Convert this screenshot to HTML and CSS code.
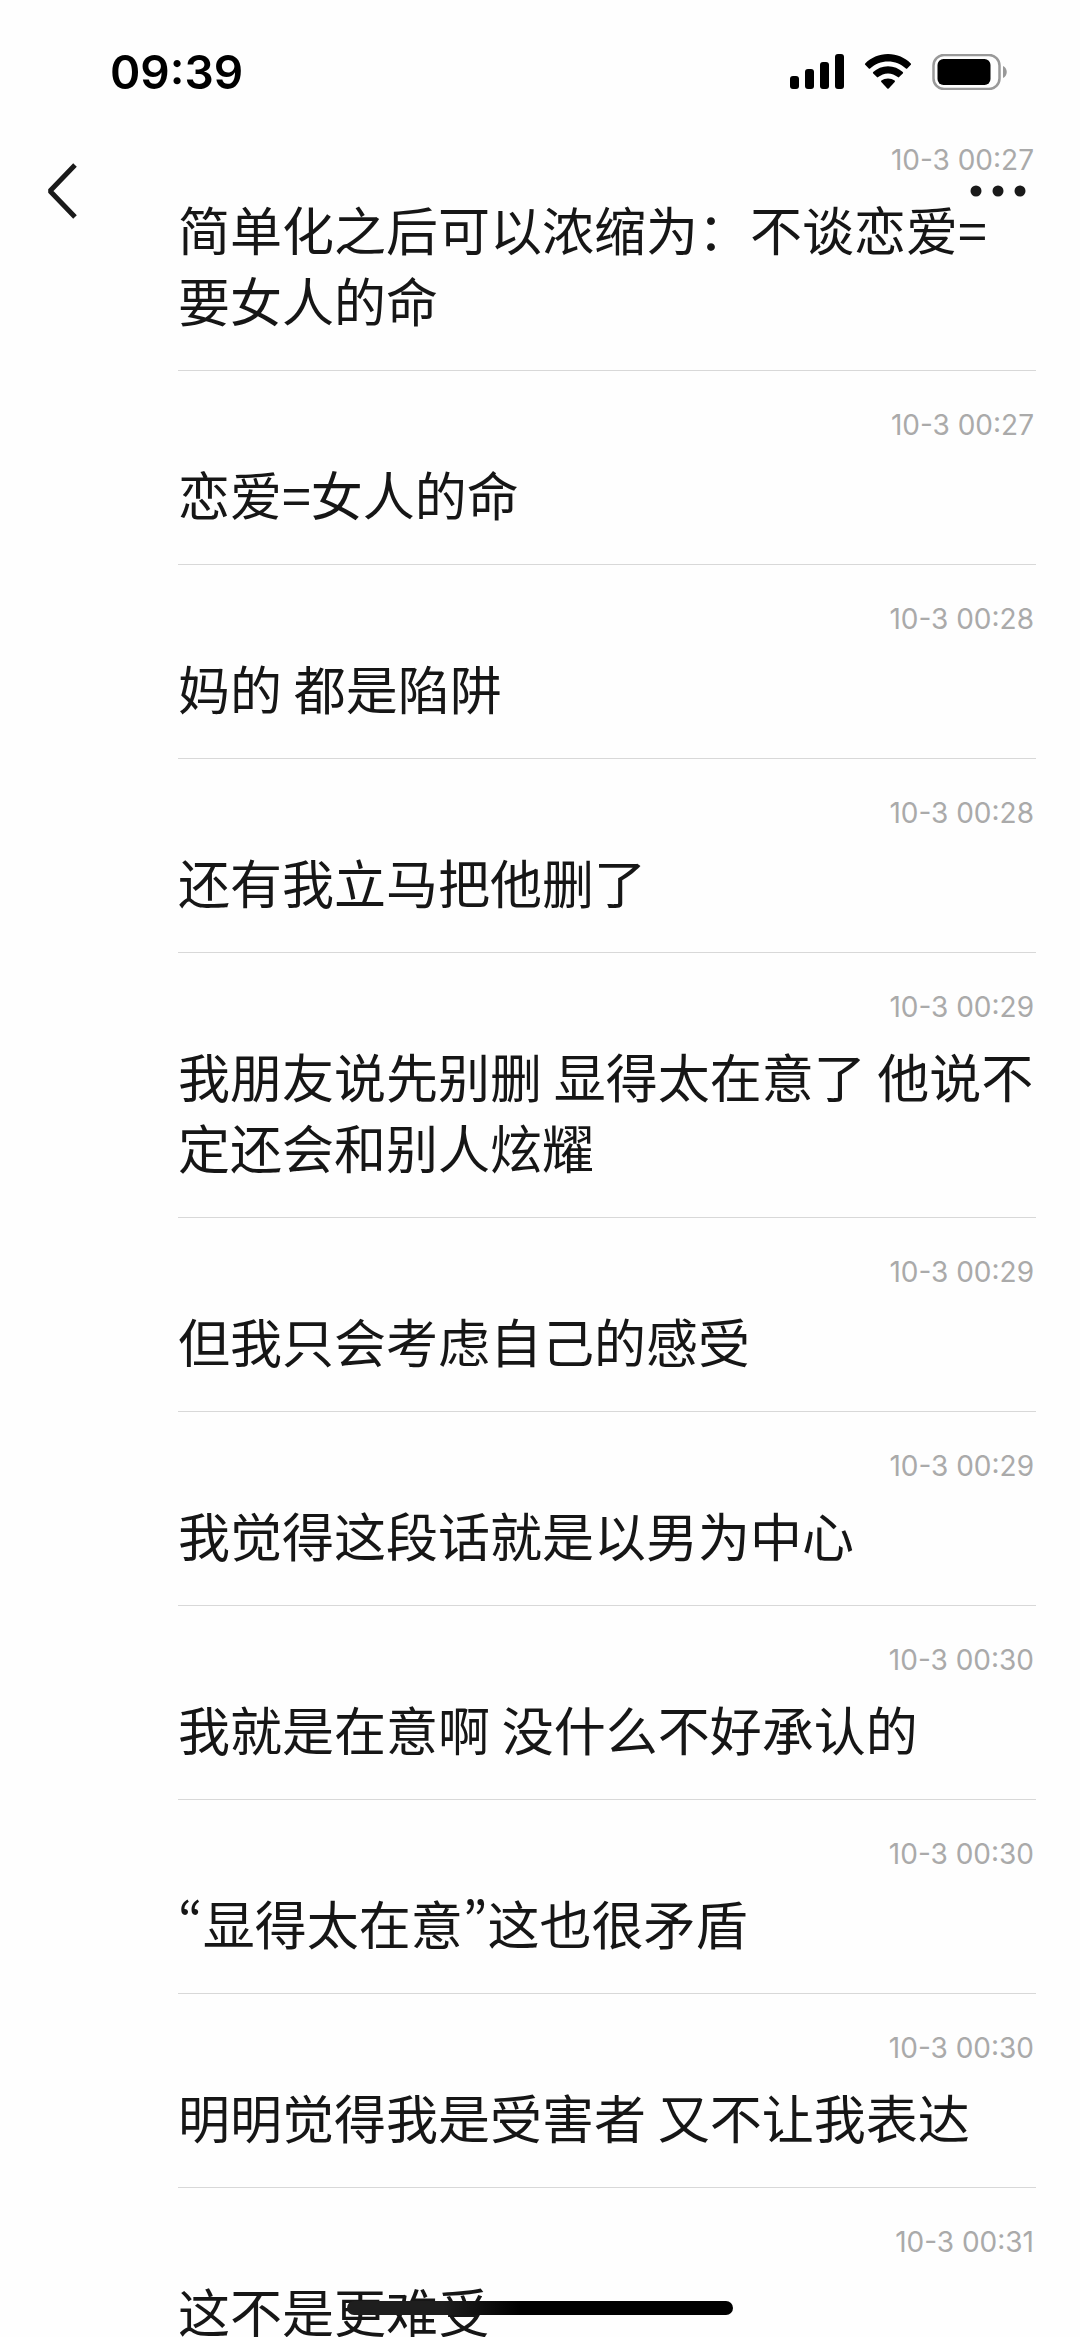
FILE: index.html
```html
<!DOCTYPE html>
<html lang="zh-CN">
<head>
    <meta charset="UTF-8">
    <meta name="viewport" content="width=device-width, initial-scale=1.0">
    <title>聊天记录</title>
    <link rel="stylesheet" href="styles.css">
</head>
<body>
<header class="top-bar">
    <div class="status-bar">
        <span class="clock">09:39</span>
        <div class="status-icons">
            <svg width="54" height="36" viewBox="0 0 54 36">
                <rect x="0" y="22" width="9" height="13" rx="3"/>
                <rect x="15" y="15" width="9" height="20" rx="3"/>
                <rect x="30" y="8" width="9" height="27" rx="3"/>
                <rect x="45" y="0" width="9" height="35" rx="3"/>
            </svg>
            <svg width="48" height="36" viewBox="0 0 48 36">
                <path d="M24 0C33 0 41 3.600 46.800 9.400Q47.500 10.100 46.800 10.800L43.200 14.400Q42.600 15 41.900 14.400C37 9.900 30.800 7.400 24 7.400S11 9.900 6.100 14.400Q5.400 15 4.800 14.400L1.200 10.800Q.5 10.100 1.200 9.400C7 3.600 15 0 24 0Z"/>
                <path d="M24 12.200C29.700 12.200 34.900 14.400 38.800 18Q39.500 18.700 38.800 19.400L35.100 23.100Q34.500 23.700 33.800 23.100C31.100 20.800 27.700 19.400 24 19.400S16.900 20.800 14.200 23.100Q13.500 23.700 12.900 23.100L9.200 19.400Q8.500 18.700 9.200 18C13.100 14.400 18.300 12.200 24 12.200Z"/>
                <path d="M24 24.400C26.500 24.400 28.800 25.200 30.600 26.600Q31.300 27.200 30.700 27.900L24.700 34.400Q24 35.100 23.300 34.400L17.300 27.900Q16.700 27.200 17.400 26.600C19.200 25.200 21.500 24.400 24 24.400Z"/>
            </svg>
            <svg width="76" height="36" viewBox="0 0 76 36">
                <rect x="1.500" y="1" width="66" height="34" rx="10.500" fill="none" stroke="#999" stroke-width="2.500"/>
                <rect x="5.500" y="5" width="53" height="26" rx="6"/>
                <path d="M71 12C76 14 76 22 71 24Z" fill="#999"/>
            </svg>
        </div>
    </div>
    <nav class="nav-bar">
        <button class="nav-btn" aria-label="返回">
            <svg width="32" height="56" viewBox="0 0 32 56">
                <path d="M29 2L4 28L29 54" fill="none" stroke="#1a1a1a" stroke-width="5" stroke-linejoin="bevel"/>
            </svg>
        </button>
        <button class="nav-btn" aria-label="更多">
            <svg width="56" height="12" viewBox="0 0 56 12" fill="#1a1a1a">
                <circle cx="6" cy="6" r="5.500"/>
                <circle cx="28" cy="6" r="5.500"/>
                <circle cx="50" cy="6" r="5.500"/>
            </svg>
        </button>
    </nav>
</header>

<main class="record-list">
    <article class="record">
        <time>10-3 00:27</time>
        <p>简单化之后可以浓缩为：不谈恋爱=要女人的命</p>
    </article>
    <article class="record">
        <time>10-3 00:27</time>
        <p>恋爱=女人的命</p>
    </article>
    <article class="record">
        <time>10-3 00:28</time>
        <p>妈的 都是陷阱</p>
    </article>
    <article class="record">
        <time>10-3 00:28</time>
        <p>还有我立马把他删了</p>
    </article>
    <article class="record">
        <time>10-3 00:29</time>
        <p>我朋友说先别删 显得太在意了 他说不定还会和别人炫耀</p>
    </article>
    <article class="record">
        <time>10-3 00:29</time>
        <p>但我只会考虑自己的感受</p>
    </article>
    <article class="record">
        <time>10-3 00:29</time>
        <p>我觉得这段话就是以男为中心</p>
    </article>
    <article class="record">
        <time>10-3 00:30</time>
        <p>我就是在意啊 没什么不好承认的</p>
    </article>
    <article class="record">
        <time>10-3 00:30</time>
        <p>“显得太在意”这也很矛盾</p>
    </article>
    <article class="record">
        <time>10-3 00:30</time>
        <p>明明觉得我是受害者 又不让我表达</p>
    </article>
    <article class="record">
        <time>10-3 00:31</time>
        <p>这不是更难受</p>
    </article>
</main>

<div class="home-indicator"></div>
</body>
</html>
```

FILE: styles.css
```css
:root {
    --text-color: #161616;
    --time-color: #aaa;
    --line-color: #d8d8d8;
}

* {
    margin: 0;
    padding: 0;
    box-sizing: border-box;
}

body {
    height: 100vh;
    overflow: hidden;
    background: #fefefe;
    color: var(--text-color);
    font-family: Inter, 'Noto Sans CJK SC', sans-serif;
}

/* Status bar and navigation float over the list */
.top-bar {
    position: fixed;
    top: 0;
    left: 0;
    right: 0;
    z-index: 1;
}

.status-bar {
    display: flex;
    justify-content: space-between;
    align-items: center;
    height: 144px;
    padding: 0 72px 0 110px;
    color: #000;
}

.clock {
    font-size: 46px;
    font-weight: 600;
}

.status-icons {
    display: flex;
    gap: 20px;
}

.nav-bar {
    display: flex;
    justify-content: space-between;
    align-items: center;
    height: 94px;
    padding: 0 54px 0 46px;
}

.nav-btn {
    display: flex;
    border: none;
    background: none;
    cursor: pointer;
}

.record-list {
    height: 100%;
    padding: 106px 44px 0 178px;
    overflow-y: auto;
    scrollbar-width: none;
}

.record {
    padding: 40px 0 35px;
    border-bottom: 1px solid var(--line-color);
}

.record time {
    display: block;
    margin-bottom: 19px;
    padding-right: 2px;
    color: var(--time-color);
    font-size: 28px;
    line-height: 28px;
    text-align: right;
}

.record p {
    font-family: 'Noto Sans CJK SC', sans-serif;
    font-size: 52px;
    font-feature-settings: 'pwid';
    line-height: 71px;
}

.home-indicator {
    position: fixed;
    bottom: 22px;
    left: 50%;
    z-index: 2;
    width: 386px;
    height: 14px;
    border-radius: 7px;
    background: linear-gradient(90deg, #1e1e1e 25%, #000 45%);
    transform: translateX(-50%);
}
```
